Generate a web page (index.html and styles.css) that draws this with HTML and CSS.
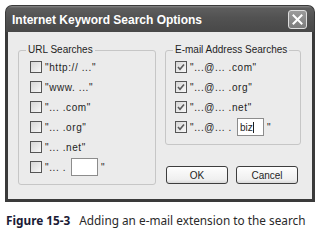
FILE: index.html
```html
<!DOCTYPE html>
<html>
<head>
<meta charset="utf-8">
<link rel="stylesheet" href="styles.css">
</head>
<body>
<div class="window">
  <div class="titlebar">
    <span class="title">Internet Keyword Search Options</span>
    <span class="close"><svg width="17" height="17" viewBox="0 0 17 17"><path d="M4.5 4.5 L12.5 12.5 M12.5 4.5 L4.5 12.5" stroke="#fff" stroke-width="2" stroke-linecap="square"/></svg></span>
  </div>
  <div class="content">
    <fieldset class="group group-left">
      <legend>URL Searches</legend>
      <div class="rows">
        <div class="row"><span class="cb"></span><span class="lbl">"http:// ..."</span></div>
        <div class="row"><span class="cb"></span><span class="lbl">"www. ..."</span></div>
        <div class="row"><span class="cb"></span><span class="lbl">"... .com"</span></div>
        <div class="row"><span class="cb"></span><span class="lbl">"... .org"</span></div>
        <div class="row"><span class="cb"></span><span class="lbl">"... .net"</span></div>
        <div class="row"><span class="cb"></span><span class="lbl">"... .</span><span class="field"></span><span class="lbl q">"</span></div>
      </div>
    </fieldset>
    <div class="right-col">
      <fieldset class="group group-right">
        <legend>E-mail Address Searches</legend>
        <div class="rows">
          <div class="row"><span class="cb checked"><svg width="10" height="10" viewBox="0 0 10 10"><path d="M2 5 L4 7.2 L8 2.6" fill="none" stroke="#5a5a5a" stroke-width="1.6"/></svg></span><span class="lbl">"...@... .com"</span></div>
          <div class="row"><span class="cb checked"><svg width="10" height="10" viewBox="0 0 10 10"><path d="M2 5 L4 7.2 L8 2.6" fill="none" stroke="#5a5a5a" stroke-width="1.6"/></svg></span><span class="lbl">"...@... .org"</span></div>
          <div class="row"><span class="cb checked"><svg width="10" height="10" viewBox="0 0 10 10"><path d="M2 5 L4 7.2 L8 2.6" fill="none" stroke="#5a5a5a" stroke-width="1.6"/></svg></span><span class="lbl">"...@... .net"</span></div>
          <div class="row"><span class="cb checked"><svg width="10" height="10" viewBox="0 0 10 10"><path d="M2 5 L4 7.2 L8 2.6" fill="none" stroke="#5a5a5a" stroke-width="1.6"/></svg></span><span class="lbl">"...@... .</span><span class="field"><span class="caret">biz</span></span><span class="lbl q">"</span></div>
        </div>
      </fieldset>
      <div class="buttons">
        <span class="btn">OK</span>
        <span class="btn">Cancel</span>
      </div>
    </div>
  </div>
</div>
<p class="caption"><span class="fig">Figure 15-3</span><span class="cap-text">Adding an e-mail extension to the search</span></p>
</body>
</html>
```

FILE: styles.css
```css
html, body {
  margin: 0;
  padding: 0;
  background: #ffffff;
}
body {
  font-family: "Liberation Sans", Arial, sans-serif;
  width: 336px;
  height: 234px;
  overflow: hidden;
}
.window {
  margin: 5px 0 0 5px;
  width: 310px;
}
.titlebar {
  height: 27px;
  box-sizing: border-box;
  border-radius: 7px 7px 0 0;
  background: linear-gradient(#8a8a8a 0, #5e5e5e 2px, #525252 45%, #484848 100%);
  border: 1px solid #3a3a3a;
  border-bottom: none;
  display: flex;
  align-items: center;
  justify-content: space-between;
  padding: 1px 7px 0 6px;
}
.title {
  color: #ffffff;
  font-weight: bold;
  font-size: 12px;
  line-height: 14px;
}
.close {
  width: 19px;
  height: 19px;
  box-sizing: border-box;
  border: 1px solid #dedede;
  border-radius: 3px;
  background: linear-gradient(#9a9a9a, #7c7c7c);
  display: flex;
  align-items: center;
  justify-content: center;
}
.close svg {
  display: block;
}
.content {
  background: #ebebeb;
  border: 3px solid #3a3a3a;
  border-top: none;
  padding: 12px 11px 14px 10px;
  display: flex;
  gap: 9px;
  align-items: flex-start;
}
.group {
  margin: 0;
  padding: 0 0 7px 0;
  border: 1px solid #c6c6c6;
  border-radius: 3px;
  min-width: 0;
}
.group legend {
  font-size: 10px;
  line-height: 12px;
  color: #1e1e1e;
  padding: 0 2px;
  margin-left: 7px;
}
.group-left {
  width: 138px;
  box-sizing: border-box;
}
.group-left .rows {
  padding: 1px 0 0 11px;
}
.right-col {
  width: 136px;
}
.group-right {
  box-sizing: border-box;
  width: 136px;
}
.group-right .rows {
  padding: 1px 0 0 9px;
}
.row {
  height: 20px;
  display: flex;
  align-items: center;
}
.cb {
  width: 12px;
  height: 12px;
  box-sizing: border-box;
  border: 1px solid #555555;
  background: linear-gradient(135deg, #d6d6d6, #f8f8f8);
  display: flex;
  align-items: center;
  justify-content: center;
  flex: none;
}
.cb svg {
  display: block;
}
.lbl {
  font-size: 10px;
  color: #1e1e1e;
  letter-spacing: 0.6px;
  margin-left: 3px;
  white-space: pre;
}
.q {
  margin-left: 3px;
}
.field {
  width: 27px;
  height: 18px;
  box-sizing: border-box;
  border: 1px solid #8c8c8c;
  background: #ffffff;
  margin-left: 5px;
  font-size: 10px;
  color: #1e1e1e;
  display: flex;
  align-items: center;
  padding-left: 2px;
}
.caret {
  border-right: 1px solid #1e1e1e;
  line-height: 11px;
}
.buttons {
  margin-top: 21px;
  display: flex;
  gap: 8px;
  padding-left: 1px;
}
.btn {
  width: 62px;
  height: 18px;
  box-sizing: border-box;
  border: 1px solid #3d3d3d;
  border-radius: 3px;
  background: linear-gradient(#fdfdfd, #efefef 80%, #d9d9d9);
  font-size: 10px;
  color: #1e1e1e;
  display: flex;
  align-items: center;
  justify-content: center;
}
.caption {
  margin: 10px 0 0 6px;
  font-family: "Noto Sans", "Open Sans", sans-serif;
  font-size: 11.8px;
  line-height: 16px;
  white-space: nowrap;
}
.fig {
  font-weight: bold;
  color: #1b1b36;
  margin-right: 9px;
}
.cap-text {
  color: #2a2a2a;
}
```
